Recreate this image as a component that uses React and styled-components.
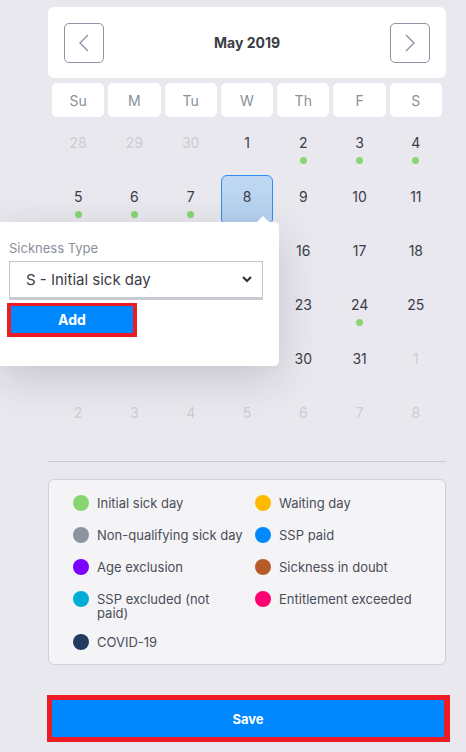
import styled, { createGlobalStyle } from 'styled-components';

const GlobalStyle = createGlobalStyle`
    body {
        margin: 0;
        background: #e9e8ee;
        font-family: Inter, "Noto Sans", sans-serif;
        color: #3a3d45;
    }
`;

const Page = styled.div`
    position: relative;
    width: 398px;
    margin-left: 48px;
    padding-top: 7px;
    padding-bottom: 9px;
`;

const HeaderCard = styled.div`
    height: 71px;
    background: #fff;
    border-radius: 6px;
    padding: 0 16px;
    display: flex;
    align-items: center;
    justify-content: space-between;
`;

const NavButton = styled.button`
    width: 40px;
    height: 40px;
    border: 1px solid #8d93a3;
    border-radius: 5px;
    background: #fff;
    display: flex;
    align-items: center;
    justify-content: center;
    padding: 0;
`;

const Title = styled.div`
    font-size: 14px;
    font-weight: 700;
    color: #3a3d45;
`;

const WeekRow = styled.div`
    display: grid;
    grid-template-columns: repeat(7, 1fr);
    gap: 4px;
    padding: 0 4px;
    margin-top: 5px;
`;

const WeekDay = styled.div`
    height: 34px;
    background: #fff;
    border-radius: 5px;
    display: flex;
    align-items: center;
    justify-content: center;
    font-size: 14px;
    color: #8a8f9a;
`;

const DaysGrid = styled.div`
    display: grid;
    grid-template-columns: repeat(7, 1fr);
    grid-auto-rows: 50px;
    gap: 4px;
    padding: 0 4px;
    margin-top: 4px;
`;

const DayCell = styled.div`
    display: flex;
    flex-direction: column;
    align-items: center;
    padding-top: 12px;
    box-sizing: border-box;
    border-radius: 6px;
    font-size: 14px;
    line-height: 18px;
    color: ${p => (p.$muted ? '#cbccd3' : '#3a3d45')};
    background: ${p => (p.$selected ? 'linear-gradient(#c0d8f2, #b3d0ee)' : 'transparent')};
    border: 1px solid ${p => (p.$selected ? '#2d8ff3' : 'transparent')};
`;

const Dot = styled.span`
    width: 7px;
    height: 7px;
    border-radius: 50%;
    margin-top: 5px;
    background: ${p => p.$color};
`;

const Divider = styled.hr`
    border: 0;
    border-top: 1px solid #c9c9d0;
    margin: 20px 0 17px;
`;

const Legend = styled.div`
    background: #f4f4f7;
    border: 1px solid #cfd0d8;
    border-radius: 6px;
    padding: 16px 12px 14px 24px;
    display: grid;
    grid-template-columns: 182px 1fr;
    row-gap: 17px;
`;

const LegendItem = styled.div`
    display: flex;
    align-items: flex-start;
    gap: 8px;
    font-size: 13px;
    line-height: 14px;
    color: #4a4d57;
    white-space: pre-line;
    margin-top: ${p => (p.$tight ? '-2px' : '0')};
`;

const LegendDot = styled.span`
    flex: none;
    width: 16px;
    height: 16px;
    border-radius: 50%;
    margin-top: -1px;
    background: ${p => p.$color};
`;

const SaveFrame = styled.div`
    margin: 30px -4px 0 -1px;
    border: 5px solid #ed1c24;
    border-right-width: 6px;
`;

const PrimaryButton = styled.button`
    display: block;
    width: 100%;
    height: ${p => p.$height}px;
    border: 0;
    padding: 0;
    background: #0088ff;
    color: #fff;
    font-family: inherit;
    font-weight: 700;
    font-size: ${p => p.$size}px;
`;

const Popover = styled.div`
    position: absolute;
    left: -48px;
    top: 222px;
    width: 279px;
    height: 144px;
    box-sizing: border-box;
    background: #fff;
    border-radius: 0 5px 5px 0;
    box-shadow: 0 12px 40px rgba(40, 40, 60, 0.18);
    padding: 18px 16px 0 9px;

    &::before {
        content: '';
        position: absolute;
        top: -6px;
        left: 257px;
        border-left: 6px solid transparent;
        border-right: 6px solid transparent;
        border-bottom: 6px solid #fff;
    }
`;

const FieldLabel = styled.div`
    font-size: 13px;
    color: #8a8f9a;
    margin-bottom: 5px;
`;

const SelectBox = styled.div`
    position: relative;
    height: 39px;
    box-sizing: border-box;
    border: 1px solid #c3c6cf;
    border-bottom: 3px solid #c8cbd4;
    display: flex;
    align-items: center;
    padding: 0 10px 0 16px;
    font-size: 15px;
    color: #3a3d45;
    justify-content: space-between;
`;

const AddFrame = styled.div`
    width: 122px;
    margin: 3px 0 0 -2px;
    border: 4px solid #ed1c24;
    border-top-width: 3px;
    border-bottom-width: 4px;
`;

const days = [
    [28, 'm'], [29, 'm'], [30, 'm'], [1], [2, 'g'], [3, 'g'], [4, 'g'],
    [5, 'g'], [6, 'g'], [7, 'g'], [8, 's'], [9], [10], [11],
    [12], [13], [14], [15], [16], [17], [18],
    [19], [20], [21], [22], [23], [24, 'g'], [25],
    [26], [27], [28], [29], [30], [31], [1, 'm'],
    [2, 'm'], [3, 'm'], [4, 'm'], [5, 'm'], [6, 'm'], [7, 'm'], [8, 'm']
];

const legend = [
    ['Initial sick day', '#88d672'],
    ['Waiting day', '#ffb900'],
    ['Non-qualifying sick day', '#8c93a1'],
    ['SSP paid', '#0088ff'],
    ['Age exclusion', '#7a00ff'],
    ['Sickness in doubt', '#b75a2a'],
    ['SSP excluded (not\npaid)', '#00acd8'],
    ['Entitlement exceeded', '#ff0070'],
    ['COVID-19', '#213a60', true]
];

const Chevron = ({ dir }) => (
    <svg width="10" height="18" viewBox="0 0 10 18" fill="none" stroke="#8d93a3" strokeWidth="1.4">
        <path d={dir === 'left' ? 'M9 1 L1 9 L9 17' : 'M1 1 L9 9 L1 17'} />
    </svg>
);

export default function App() {
    return (
        <Page>
            <GlobalStyle />
            <HeaderCard>
                <NavButton><Chevron dir="left" /></NavButton>
                <Title>May 2019</Title>
                <NavButton><Chevron dir="right" /></NavButton>
            </HeaderCard>
            <WeekRow>
                {['Su', 'M', 'Tu', 'W', 'Th', 'F', 'S'].map(d => (
                    <WeekDay key={d}>{d}</WeekDay>
                ))}
            </WeekRow>
            <DaysGrid>
                {days.map(([n, flag], i) => (
                    <DayCell key={i} $muted={flag === 'm'} $selected={flag === 's'}>
                        {n}
                        {flag === 'g' && <Dot $color="#88d672" />}
                    </DayCell>
                ))}
            </DaysGrid>
            <Divider />
            <Legend>
                {legend.map(([label, color, tight]) => (
                    <LegendItem key={label} $tight={tight}>
                        <LegendDot $color={color} />
                        <span>{label}</span>
                    </LegendItem>
                ))}
            </Legend>
            <SaveFrame>
                <PrimaryButton $height={37} $size={13}>Save</PrimaryButton>
            </SaveFrame>
            <Popover>
                <FieldLabel>Sickness Type</FieldLabel>
                <SelectBox>
                    <span>S - Initial sick day</span>
                    <svg width="10" height="7" viewBox="0 0 10 7" fill="none" stroke="#2b2e36" strokeWidth="2">
                        <path d="M1 1 L5 5 L9 1" />
                    </svg>
                </SelectBox>
                <AddFrame>
                    <PrimaryButton $height={27} $size={14}>Add</PrimaryButton>
                </AddFrame>
            </Popover>
        </Page>
    );
}
